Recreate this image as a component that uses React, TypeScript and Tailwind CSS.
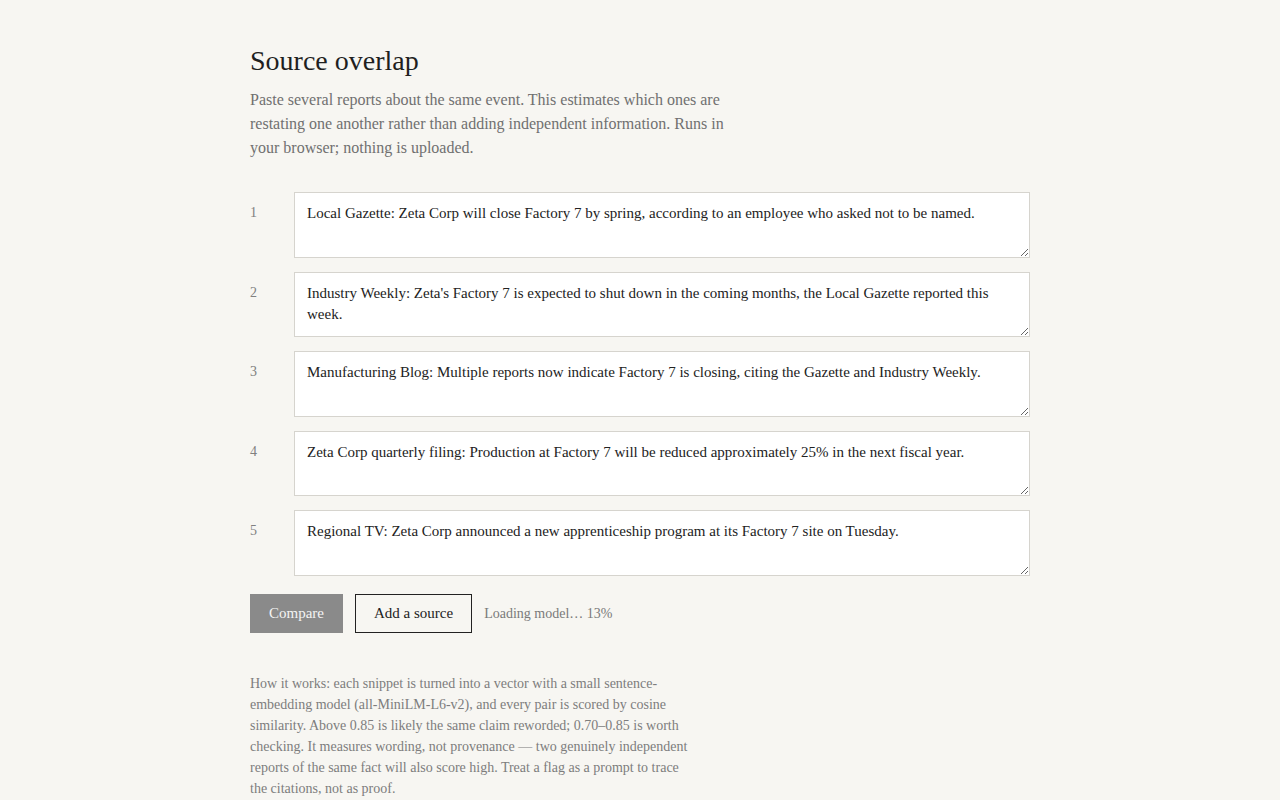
import { useState } from 'react';

const initialSources = [
  'Local Gazette: Zeta Corp will close Factory 7 by spring, according to an employee who asked not to be named.',
  "Industry Weekly: Zeta's Factory 7 is expected to shut down in the coming months, the Local Gazette reported this week.",
  'Manufacturing Blog: Multiple reports now indicate Factory 7 is closing, citing the Gazette and Industry Weekly.',
  'Zeta Corp quarterly filing: Production at Factory 7 will be reduced approximately 25% in the next fiscal year.',
  'Regional TV: Zeta Corp announced a new apprenticeship program at its Factory 7 site on Tuesday.',
];

export default function App() {
  const [sources, setSources] = useState(initialSources);

  return (
    <div className="min-h-screen bg-[#f7f6f2] text-[#222] font-['Liberation_Serif',serif]">
      <main className="mx-auto w-[780px] pt-[42px] pb-10">
        <h1 className="text-[28px] leading-[38px] font-normal text-[#1f1f1f]">Source overlap</h1>
        <p className="mt-[8px] max-w-[480px] text-[16px] leading-[24px] text-[#707070]">
          Paste several reports about the same event. This estimates which ones are restating one
          another rather than adding independent information. Runs in your browser; nothing is
          uploaded.
        </p>

        <div className="mt-[32px] flex flex-col gap-[14px]">
          {sources.map((text, i) => (
            <div key={i} className="flex items-start">
              <span className="w-[44px] shrink-0 pt-[11px] text-[14px] leading-[20px] text-[#808080]">
                {i + 1}
              </span>
              <textarea
                rows={2}
                value={text}
                onChange={(e) =>
                  setSources((s) => s.map((v, j) => (j === i ? e.target.value : v)))
                }
                className="block h-[65.5px] flex-1 border border-[#d6d4ce] bg-white px-[12px] py-[10px] text-[15px] leading-[21px] text-[#222] outline-none font-['Liberation_Serif',serif]"
              />
            </div>
          ))}
        </div>

        <div className="mt-[18px] flex items-center gap-3">
          <button className="h-[39px] bg-[#8a8a8a] px-[19px] text-[15px] text-[#f4f4f4]">
            Compare
          </button>
          <button
            onClick={() => setSources((s) => [...s, ''])}
            className="h-[39px] border border-[#222] px-[18px] text-[15px] text-[#222]"
          >
            Add a source
          </button>
          <span className="text-[14px] text-[#7a7a7a]">Loading model… 13%</span>
        </div>

        <p className="mt-[40px] max-w-[440px] text-[14px] leading-[21px] text-[#7d7d7d]">
          How it works: each snippet is turned into a vector with a small sentence-embedding model
          (all-MiniLM-L6-v2), and every pair is scored by cosine similarity. Above 0.85 is likely
          the same claim reworded; 0.70–0.85 is worth checking. It measures wording, not
          provenance — two genuinely independent reports of the same fact will also score high.
          Treat a flag as a prompt to trace the citations, not as proof.
        </p>
      </main>
    </div>
  );
}
